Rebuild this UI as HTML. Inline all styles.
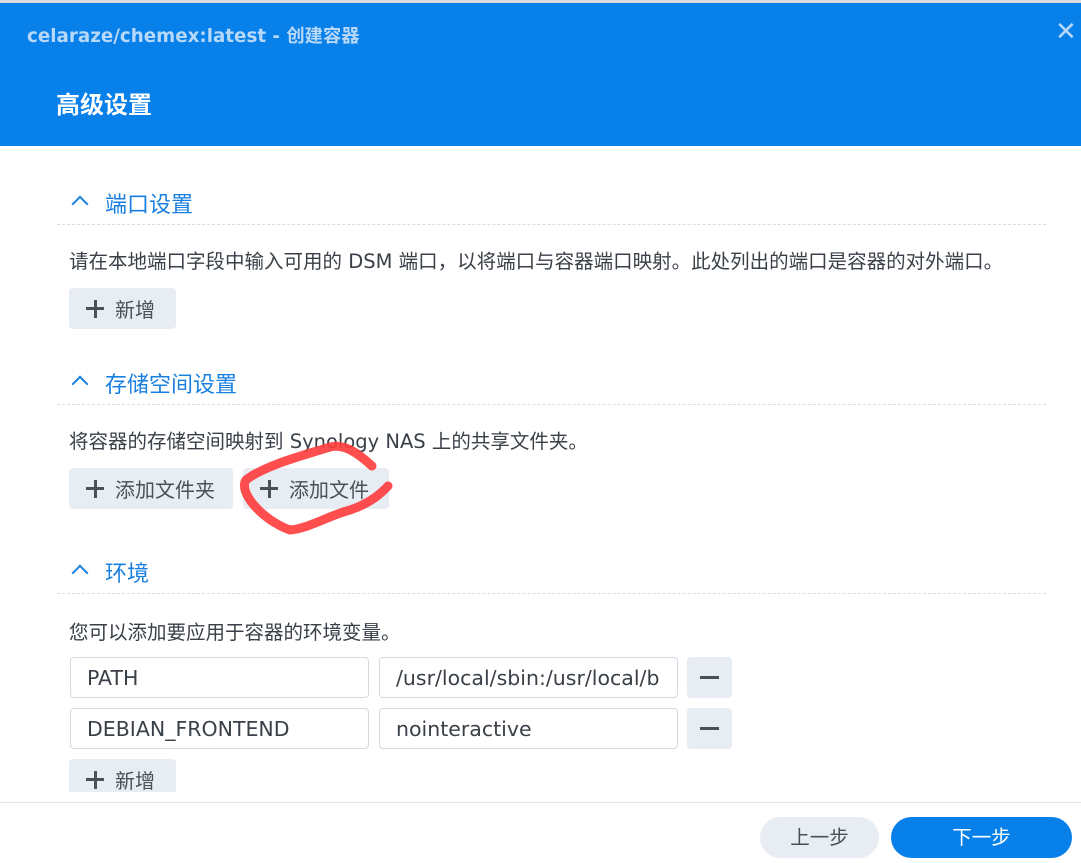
<!DOCTYPE html>
<html><head><meta charset="utf-8"><style>
*{margin:0;padding:0;box-sizing:border-box}
body{width:1081px;height:863px;background:#fff;position:relative;overflow:hidden;font-family:"DejaVu Sans","Noto Sans CJK SC",sans-serif;color:#3a4048}
.a{position:absolute;white-space:nowrap}
.top{left:0;top:0;width:1081px;height:3px;background:#dcdcdc}
.hdr{left:0;top:3px;width:1081px;height:143px;background:#0780ea}
.sh{font-size:22px;color:#1a80e0;left:105px}
.chev{left:74px;width:12px;height:12px;border-left:2.5px solid #1a80e0;border-top:2.5px solid #1a80e0;transform:rotate(45deg)}
.line{left:57px;width:989px;border-top:1px dashed #d6dde6}
.desc{left:69px;font-size:19.5px;color:#3a4048}
.btn{background:#e8ecf3;border-radius:4px;height:41px;font-size:20px;color:#4a5058;display:flex;align-items:center;padding-left:17px}
.pl{position:relative;width:18px;height:18px;margin-right:11px}
.pl:before{content:"";position:absolute;left:0;top:7.5px;width:18px;height:3px;background:#4a5058}
.pl:after{content:"";position:absolute;left:7.5px;top:0;width:3px;height:18px;background:#4a5058}
.inp{border:1px solid #d2dae4;border-radius:4px;height:41px;font-size:20.5px;color:#3a4048;padding-left:16px;line-height:41px;white-space:nowrap;overflow:hidden}
.inp span{display:inline-block;max-width:265px;overflow:hidden;vertical-align:top}
.min{background:#e8ecf3;border-radius:4px;width:45px;height:41px}
.min:after{content:"";position:absolute;left:13px;top:19px;width:19px;height:3px;background:#4a5058}
</style></head><body>
<div class="a top"></div>
<div class="a hdr"></div>
<div class="a" style="left:27px;top:22px;font-size:18.3px;font-weight:bold;color:#b7d8f8">celaraze/chemex:latest - 创建容器</div>
<div class="a" style="left:1055px;top:17px;font-size:26px;font-weight:bold;color:#b7d8f8">✕</div>
<div class="a" style="left:56px;top:85px;font-size:24px;font-weight:bold;color:#fff">高级设置</div>

<div class="a chev" style="top:198px"></div>
<div class="a sh" style="top:187px">端口设置</div>
<div class="a line" style="top:224px"></div>
<div class="a desc" style="top:245px">请在本地端口字段中输入可用的 DSM 端口，以将端口与容器端口映射。此处列出的端口是容器的对外端口。</div>
<div class="a btn" style="left:69px;top:288px;width:107px"><span class="pl"></span>新增</div>

<div class="a chev" style="top:378px"></div>
<div class="a sh" style="top:367px">存储空间设置</div>
<div class="a line" style="top:404px"></div>
<div class="a desc" style="top:425px">将容器的存储空间映射到 Synology NAS 上的共享文件夹。</div>
<div class="a btn" style="left:69px;top:468px;width:164px"><span class="pl"></span>添加文件夹</div>
<div class="a btn" style="left:243px;top:468px;width:146px"><span class="pl"></span>添加文件</div>

<div class="a chev" style="top:567px"></div>
<div class="a sh" style="top:556px">环境</div>
<div class="a line" style="top:593px"></div>
<div class="a desc" style="top:616px">您可以添加要应用于容器的环境变量。</div>
<div class="a inp" style="left:70px;top:657px;width:299px">PATH</div>
<div class="a inp" style="left:379px;top:657px;width:299px"><span>/usr/local/sbin:/usr/local/bin</span></div>
<div class="a min" style="left:687px;top:657px"></div>
<div class="a inp" style="left:70px;top:708px;width:299px">DEBIAN_FRONTEND</div>
<div class="a inp" style="left:379px;top:708px;width:299px">nointeractive</div>
<div class="a min" style="left:687px;top:708px"></div>
<div class="a" style="left:69px;top:759px;width:107px;height:33px;overflow:hidden"><div class="btn" style="width:107px"><span class="pl"></span>新增</div></div>

<div class="a" style="left:0;top:802px;width:1081px;border-top:1px solid #dfe5ec"></div>
<div class="a" style="left:760px;top:817px;width:119px;height:41px;border-radius:21px;background:#e8ecf3;color:#4a5058;font-size:19.5px;text-align:center;line-height:41px">上一步</div>
<div class="a" style="left:891px;top:817px;width:181px;height:41px;border-radius:21px;background:#0780ea;color:#fff;font-size:19.5px;text-align:center;line-height:41px">下一步</div>

<svg class="a" style="left:0;top:0" width="1081" height="863">
<path d="M372,466 C360,455 345,443 330,447 C305,455 265,465 246,480 C238,492 262,520 290,530 C310,528 330,515 350,510 C365,505 378,497 388,486" fill="none" stroke="#ff3b3b" stroke-width="9" stroke-linecap="round" stroke-opacity="0.9"/>
</svg>
</body></html>
